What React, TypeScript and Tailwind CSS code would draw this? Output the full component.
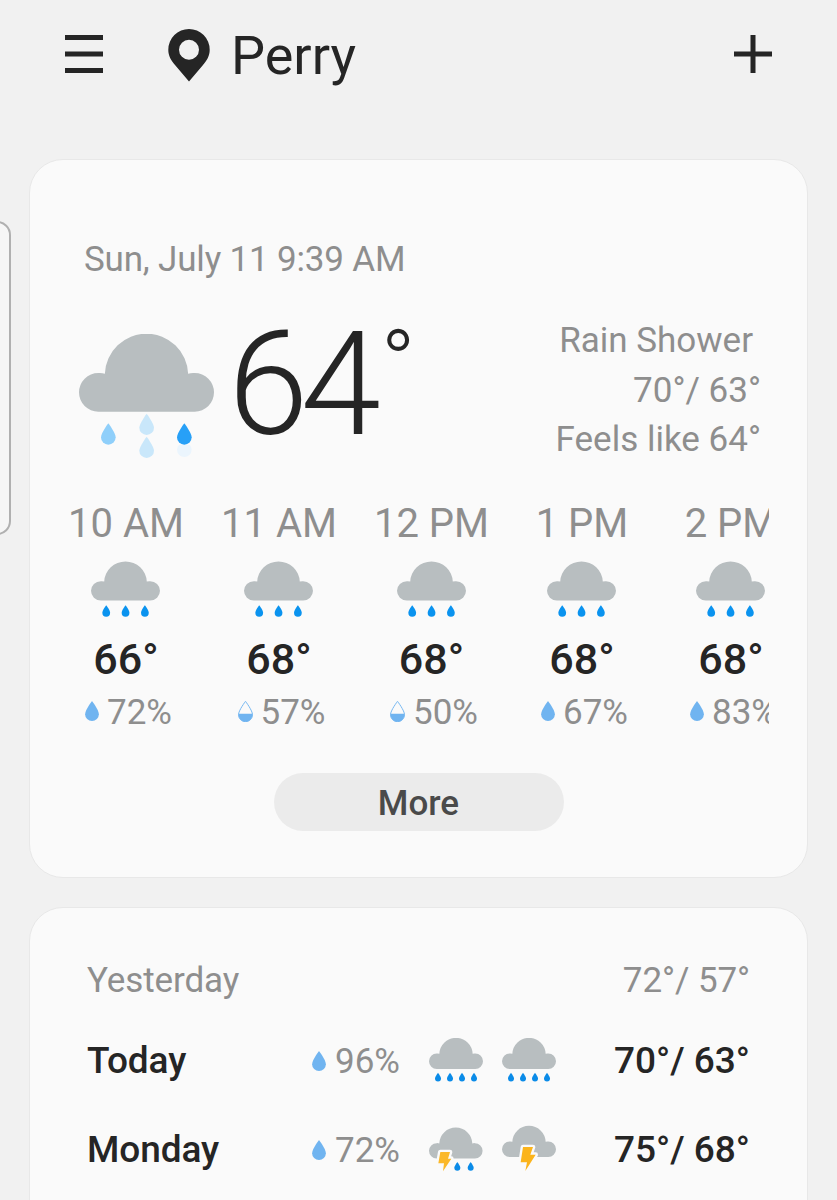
type DropKind = 'full' | 'half';

interface Hour {
  time: string;
  temp: string;
  chance: string;
  drop: DropKind;
  width: string;
}

const hours: Hour[] = [
  { time: '10 AM', temp: '66°', chance: '72%', drop: 'full', width: 'w-[153px]' },
  { time: '11 AM', temp: '68°', chance: '57%', drop: 'half', width: 'w-[153px]' },
  { time: '12 PM', temp: '68°', chance: '50%', drop: 'half', width: 'w-[152px]' },
  { time: '1 PM', temp: '68°', chance: '67%', drop: 'full', width: 'w-[149px]' },
  { time: '2 PM', temp: '68°', chance: '83%', drop: 'full', width: 'w-[149px]' },
];

const cloudPath =
  'M58 233A58 58 0 0 1 58 117Q68 116 77.6 119A125 125 0 0 1 327.4 119Q337 116 347 117A58 58 0 0 1 347 233Z';
const dropPath = 'M22 0C22 0 44 29 44 42A22 22 0 0 1 0 42C0 29 22 0 22 0Z';

function RainDrop({ x, y, scale, fill }: { x: number; y: number; scale: number; fill: string }) {
  return <path d={dropPath} transform={`translate(${x} ${y}) scale(${scale})`} fill={fill} />;
}

function CurrentIcon() {
  return (
    <svg viewBox="0 0 405 384" className="h-32 w-[135px] shrink-0" aria-hidden="true">
      <path d={cloudPath} fill="#b8bec0" />
      <RainDrop x={66} y={268} scale={1} fill="#8fcffa" />
      <RainDrop x={181} y={239} scale={1} fill="#c9e7fa" />
      <RainDrop x={181} y={308} scale={1} fill="#c9e7fa" />
      <path d="M300 332A22 22 0 1 0 332 332Z" fill="#ebf5fd" />
      <RainDrop x={294} y={268} scale={1} fill="#27a0f7" />
    </svg>
  );
}

function HourlyIcon() {
  return (
    <svg viewBox="0 0 207 168" className="h-14 w-[69px] shrink-0" aria-hidden="true">
      <path d={cloudPath} transform="translate(0 2) scale(.511 .5)" fill="#b8bec0" />
      {[34, 92, 150].map((x) => (
        <RainDrop key={x} x={x} y={133} scale={0.53} fill="#0a93ef" />
      ))}
    </svg>
  );
}

function RainIcon() {
  return (
    <svg viewBox="0 0 162 135" className="h-[45px] w-[54px]" aria-hidden="true">
      <path d={cloudPath} transform="scale(.4)" fill="#b8bec0" />
      {[18, 54, 90, 126].map((x) => (
        <RainDrop key={x} x={x} y={104} scale={0.41} fill="#0a8be8" />
      ))}
    </svg>
  );
}

function StormRainIcon() {
  return (
    <svg viewBox="0 0 162 135" className="h-[45px] w-[54px] overflow-visible" aria-hidden="true">
      <path d={cloudPath} transform="translate(0 2) scale(.397)" fill="#b8bec0" />
      <path
        d="M34 75H63L57 95H67L42 133L45 109H28Z"
        fill="#fbb829"
        stroke="#fafafa"
        strokeWidth="14"
        strokeLinejoin="round"
        paintOrder="stroke"
      />
      <RainDrop x={76} y={105} scale={0.41} fill="#0a8be8" />
      <RainDrop x={116} y={105} scale={0.41} fill="#0a8be8" />
    </svg>
  );
}

function StormIcon() {
  return (
    <svg viewBox="0 0 162 135" className="h-[45px] w-[54px] overflow-visible" aria-hidden="true">
      <path d={cloudPath} transform="translate(0 -3) scale(.4)" fill="#b8bec0" />
      <path
        d="M63 60H93L85 83H101L70 132L75 106H56Z"
        fill="#fbb41c"
        stroke="#fafafa"
        strokeWidth="14"
        strokeLinejoin="round"
        paintOrder="stroke"
      />
    </svg>
  );
}

function ChanceDrop({ kind = 'full' }: { kind?: DropKind }) {
  if (kind === 'half') {
    return (
      <svg viewBox="-1 -1 46 66" className="h-[21px] w-[15px]" aria-hidden="true">
        <path d="M0 39H44V42A22 22 0 0 1 0 42Z" fill="#70b4f0" />
        <path d={dropPath} fill="none" stroke="#70b4f0" strokeWidth="3" />
      </svg>
    );
  }
  return (
    <svg viewBox="0 0 44 64" className="h-5 w-[14px]" aria-hidden="true">
      <path d={dropPath} fill="#70b4f0" />
    </svg>
  );
}

const days = [
  { name: 'Today', chance: '96%', icons: [RainIcon, RainIcon], range: '70°/ 63°' },
  { name: 'Monday', chance: '72%', icons: [StormRainIcon, StormIcon], range: '75°/ 68°' },
];

function Header() {
  return (
    <header className="flex h-[108px] items-center pl-[65px] pr-[65px]">
      <button type="button" aria-label="Menu">
        <svg viewBox="0 0 38 38" className="h-[38px] w-[38px]" fill="#252525">
          <path d="M0 0H38V5H0ZM0 16.5H38V21.5H0ZM0 33H38V38H0Z" />
        </svg>
      </button>
      <svg viewBox="0 0 42 53" className="ml-[65px] mt-[2px] h-[53px] w-[42px]" fill="#252525" aria-hidden="true">
        <path
          fillRule="evenodd"
          d="M21 0A20.7 20.7 0 0 1 41.7 20.7C41.7 27 39 31 35 36L21 52.5L7 36C3 31 .3 27 .3 20.7A20.7 20.7 0 0 1 21 0ZM21 10.7A10 10 0 1 0 21 30.7A10 10 0 1 0 21 10.7Z"
        />
      </svg>
      <h1 className="ml-[21px] mt-[4px] text-[54px] leading-[64px] text-[#252525]">Perry</h1>
      <button type="button" aria-label="Add" className="ml-auto">
        <svg viewBox="0 0 38 38" className="h-[38px] w-[38px]" fill="#252525">
          <path d="M16.5 0H21.5V16.5H38V21.5H21.5V38H16.5V21.5H0V16.5H16.5Z" />
        </svg>
      </button>
    </header>
  );
}

function CurrentCard() {
  return (
    <section className="mx-[29px] mt-[51px] h-[719px] rounded-[34px] border border-[#e8e8e8] bg-[#fafafa] pt-[80px]">
      <p className="pl-[54px] text-[35px] leading-[40px] tracking-[-0.18px] text-[#8e8e8e]">Sun, July 11 9:39 AM</p>

      <div className="mt-[54px] flex h-[150px] pl-[49px] pr-[46px]">
        <CurrentIcon />
        <div className="-mt-[21px] ml-[14px] flex text-[#252525]">
          <span className="text-[145px] font-light leading-[142px] tracking-[-8px]">64</span>
          <span className="ml-[8px] mt-[5px] text-[92px] font-light leading-[92px]">°</span>
        </div>
        <div className="-mt-[18px] ml-auto text-right text-[35px] leading-[49.5px] text-[#8e8e8e]">
          <p className="pr-2">Rain Shower</p>
          <p>70°/ 63°</p>
          <p>Feels like 64°</p>
        </div>
      </div>

      <div className="ml-[19px] mr-[38px] mt-[15px] flex overflow-hidden">
        {hours.map((hour) => (
          <div key={hour.time} className={`flex shrink-0 flex-col items-center ${hour.width}`}>
            <span className="pl-px text-[40px] leading-[50px] text-[#8e8e8e]">{hour.time}</span>
            <div className="mt-[12px]">
              <HourlyIcon />
            </div>
            <span className="mt-[17px] pl-px text-[43px] font-medium leading-[50px] text-[#252525]">{hour.temp}</span>
            <div className="mt-[3px] flex items-center gap-2 pl-[6px] text-[35px] leading-[44px] text-[#8e8e8e]">
              <ChanceDrop kind={hour.drop} />
              <span className="pt-[4px]">{hour.chance}</span>
            </div>
          </div>
        ))}
      </div>

      <button
        type="button"
        className="mx-auto mt-[38px] block h-[58px] w-[290px] rounded-full bg-[#ebebeb] pt-[3px] text-[35px] font-medium leading-[55px] text-[#4a4a4a]"
      >
        More
      </button>
    </section>
  );
}

function DailyCard() {
  return (
    <section className="mx-[29px] mt-[29px] h-[400px] rounded-[34px] border border-[#e8e8e8] bg-[#fafafa] pl-[57px] pr-[57px] pt-[49px]">
      <div className="flex h-[48px] items-center justify-between text-[35px] tracking-[-0.1px] text-[#8e8e8e]">
        <span>Yesterday</span>
        <span>72°/ 57°</span>
      </div>
      <div className="mt-[11px]">
        {days.map((day) => {
          const [DayIcon, NightIcon] = day.icons;
          return (
            <div key={day.name} className="flex h-[89px] items-center text-[37px] text-[#252525]">
              <span className="w-[225px] font-medium tracking-[-0.1px]">{day.name}</span>
              <div className="flex w-[117px] items-center gap-[9px] text-[35px] text-[#8e8e8e]">
                <ChanceDrop />
                <span className="pt-[3px]">{day.chance}</span>
              </div>
              <div className="flex gap-[19px]">
                <DayIcon />
                <NightIcon />
              </div>
              <span className="ml-auto font-medium">{day.range}</span>
            </div>
          );
        })}
      </div>
    </section>
  );
}

export default function App() {
  return (
    <main className="relative h-[1200px] w-full overflow-hidden bg-[#f1f1f1] font-[Roboto,sans-serif]">
      <Header />
      <CurrentCard />
      <DailyCard />
      {/* edge panel handle */}
      <div className="absolute -left-5 top-[221px] h-[314px] w-[31px] rounded-[14px] border-2 border-[#b0b0b0] bg-[#f6f6f6]" />
    </main>
  );
}
